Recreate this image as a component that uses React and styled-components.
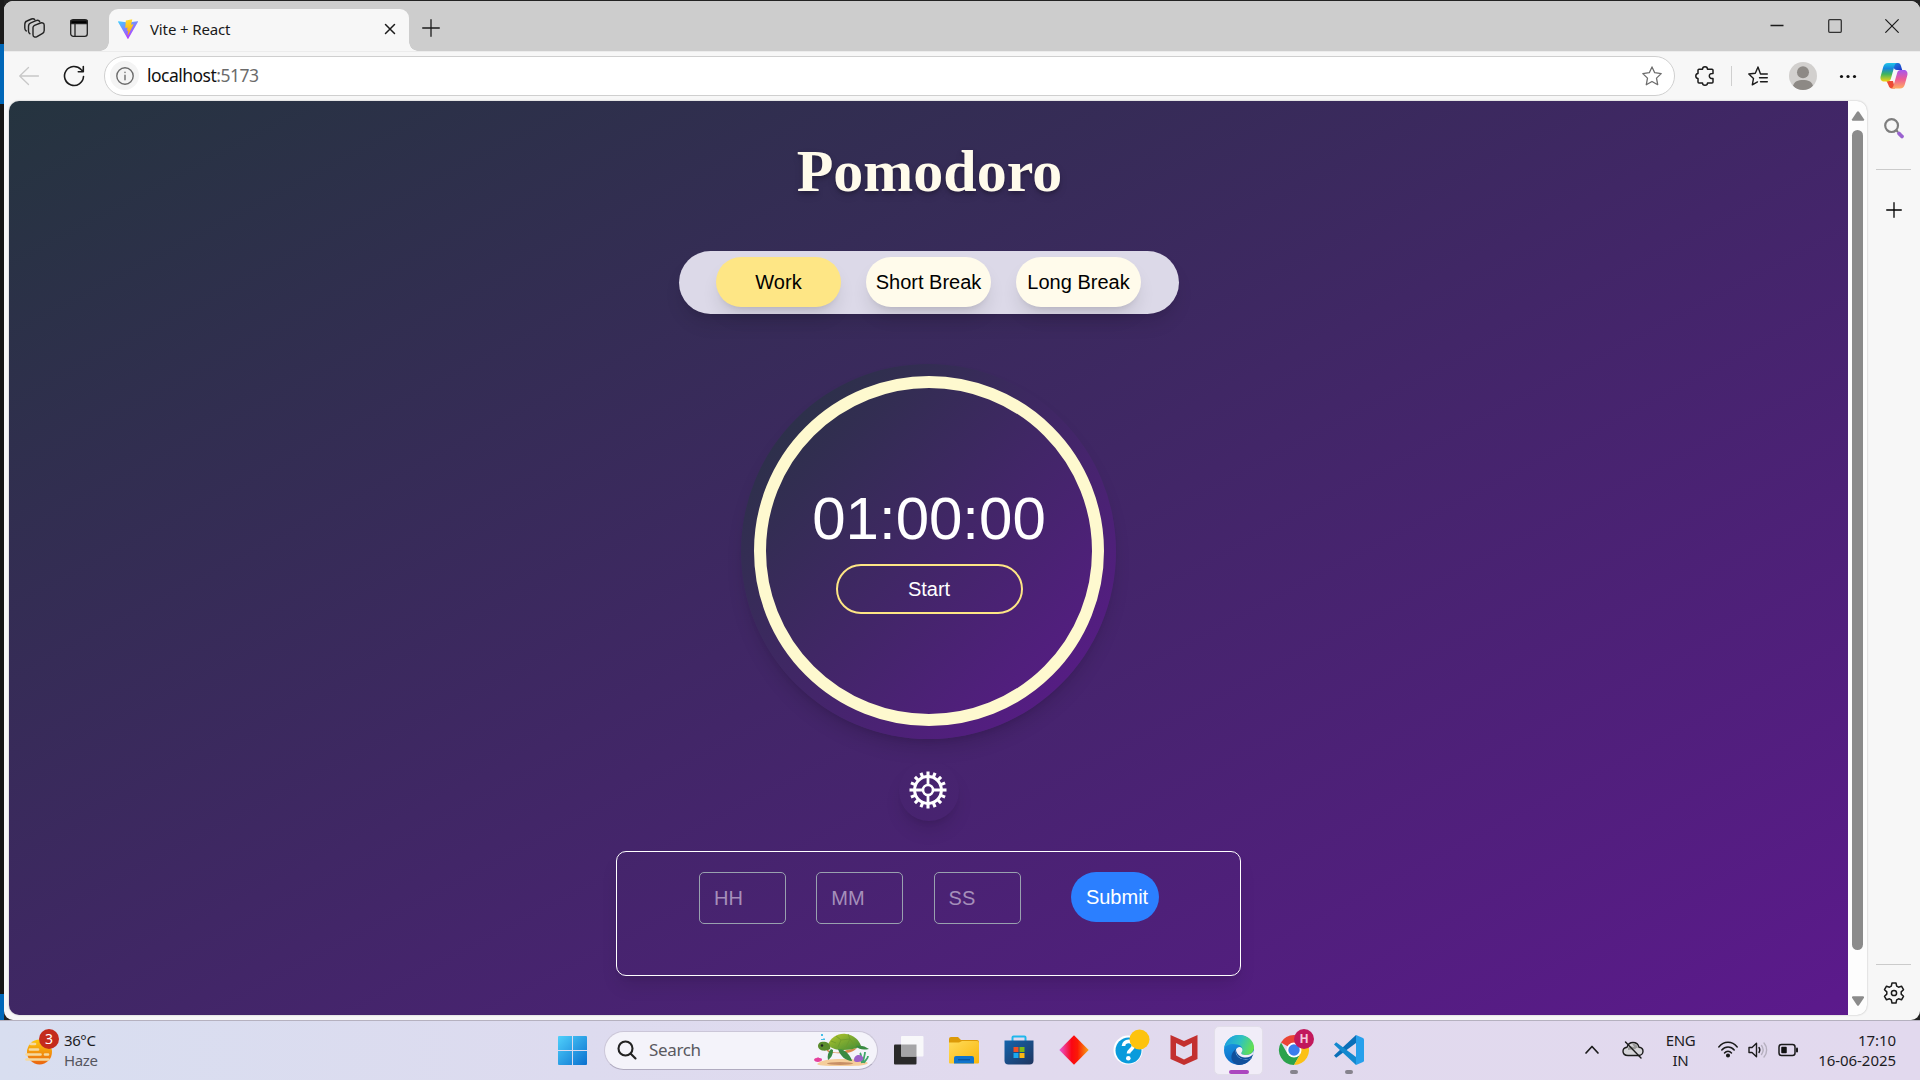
import React from "react";
import styled, { createGlobalStyle } from "styled-components";

const Global = createGlobalStyle`
  * { box-sizing: border-box; }
  html, body { margin: 0; padding: 0; overflow: hidden; }
  body { font-family: "Noto Sans", "Open Sans", sans-serif; background: #1b1b1b; }
  svg { display: block; flex: none; overflow: visible; }
  button, input { font: inherit; margin: 0; }
`;

const Desktop = styled.div`
  width: 1920px;
  height: 1080px;
  display: flex;
  flex-direction: column;
  overflow: hidden;
  background: linear-gradient(#1b1b1b 0 44px, #0067b8 44px 104px, #161616 104px 994px, #0067b8 994px 1019px) 0 0 / 4px 1020px no-repeat, #222;
`;

const Window = styled.div`
  width: 1916px;
  height: 1019px;
  margin: 1px 0 0 4px;
  border-radius: 9px;
  overflow: hidden;
  background: #f7f7f7;
  display: flex;
  flex-direction: column;
`;

const TitleBar = styled.div`
  height: 50px;
  flex: none;
  background: #cdcdcd;
  display: flex;
  align-items: flex-end;
`;

const TabTools = styled.div`
  width: 105px;
  height: 100%;
  padding: 4px 21px 0 20px;
  display: flex;
  align-items: center;
  justify-content: space-between;
`;

const Tab = styled.div`
  position: relative;
  width: 300px;
  height: 42px;
  padding: 0 13px 2px 9px;
  border-radius: 9px 9px 0 0;
  background: #f7f7f7;
  display: flex;
  align-items: center;
  &::before, &::after {
    content: "";
    position: absolute;
    bottom: 0;
    width: 9px;
    height: 9px;
  }
  &::before { left: -9px; background: radial-gradient(circle at 0 0, transparent 8.5px, #f7f7f7 9px); }
  &::after { right: -9px; background: radial-gradient(circle at 100% 0, transparent 8.5px, #f7f7f7 9px); }
`;

const TabTitle = styled.span`
  flex: 1;
  margin-left: 12px;
  font-size: 15px;
  letter-spacing: -0.13px;
  line-height: 20px;
  padding-bottom: 1px;
  color: #1a1a1a;
`;

const NewTab = styled.div`
  height: 100%;
  padding: 4px 0 0 13px;
  display: flex;
  align-items: center;
`;

const WindowButtons = styled.div`
  margin-left: auto;
  margin-right: -1px;
  height: 100%;
  display: grid;
  grid-template-columns: repeat(3, 57.5px);
  justify-items: center;
  align-items: center;
`;

const Toolbar = styled.div`
  height: 50px;
  flex: none;
  display: flex;
  align-items: center;
  padding-bottom: 2px;
  border-top: 1px solid #ececec;
`;

const NavButtons = styled.div`
  width: 100px;
  flex: none;
  padding-left: 15px;
  display: flex;
  align-items: center;
  gap: 24px;
`;

const AddressBar = styled.div`
  width: 1571px;
  flex: none;
  height: 40px;
  border: 1px solid #cfcfcf;
  border-radius: 20px;
  background: #fff;
  display: flex;
  align-items: center;
  padding: 0 12px 0 5px;
`;

const InfoBadge = styled.div`
  width: 29px;
  height: 29px;
  border-radius: 50%;
  background: #f4f4f4;
  display: grid;
  place-items: center;
`;

const Url = styled.span`
  flex: 1;
  margin-left: 8px;
  font-size: 17.5px;
  letter-spacing: -0.52px;
  line-height: 24px;
  padding-bottom: 1px;
  color: #111;
  span { color: #6b6b6b; }
`;

const ToolbarActions = styled.div`
  flex: none;
  display: grid;
  grid-template-columns: 60px 0 45px 45px 45px 48px;
  justify-items: center;
  align-items: center;
`;

const Divider = styled.div`
  width: 1px;
  height: 20px;
  margin-right: 8px;
  background: #cfcfcf;
`;

const Avatar = styled.div`
  width: 28px;
  height: 28px;
  border-radius: 50%;
  overflow: hidden;
  background: #d2d0ce;
`;

const Body = styled.div`
  flex: 1;
  display: flex;
  padding: 0 0 5px 5px;
`;

const Viewport = styled.div`
  width: 1858px;
  flex: none;
  height: 914px;
  display: flex;
  border-radius: 10px;
  overflow: hidden;
  background: #fdfdfd;
  box-shadow: 0 0 2px rgba(0, 0, 0, 0.28);
`;

const Page = styled.main`
  width: 1839px;
  flex: none;
  height: 914px;
  background: linear-gradient(to bottom right, #25343f, #5d198e) 0 0 / 100% 960px no-repeat;
  display: flex;
  flex-direction: column;
  align-items: center;
  font-family: "Liberation Sans", Arial, sans-serif;
  font-size: 20px;
`;

const Title = styled.h1`
  margin: 31px 0 0;
  padding-left: 2px;
  height: 75px;
  font-family: "Liberation Serif", "Times New Roman", serif;
  font-size: 60px;
  line-height: 78px;
  font-weight: 700;
  color: #fffbeb;
  text-shadow: 0 3px 3px rgba(0, 0, 0, 0.18), 0 4px 8px rgba(0, 0, 0, 0.12);
`;

const softShadow = "0 12px 19px -4px rgba(0,0,0,.12), 0 5px 7px -5px rgba(0,0,0,.12)";

const Modes = styled.div`
  margin-top: 44px;
  width: 500px;
  height: 63px;
  border-radius: 32px;
  background: #dcd9e8;
  box-shadow: ${softShadow};
  display: flex;
  justify-content: center;
  gap: 25px;
  padding: 6px 0;
`;

const ModeButton = styled.button`
  width: 125px;
  height: 50px;
  padding: 0;
  border: 0;
  border-radius: 25px;
  color: #000;
  white-space: nowrap;
  background: ${(p) => (p.$active ? "#fee685" : "#fffbeb")};
  box-shadow: ${softShadow};
`;

const Dial = styled.div`
  margin-top: 50px;
  width: 375px;
  height: 375px;
  padding: 12px 12px 13px 13px;
  border-radius: 50%;
  background: linear-gradient(to bottom right, #25343f, #5d198e);
  box-shadow: 0 12px 19px -4px rgba(0,0,0,.14), 0 5px 7px -5px rgba(0,0,0,.14);
`;

const Ring = styled.div`
  width: 350px;
  height: 350px;
  border: 12.5px solid #fef9cf;
  border-radius: 50%;
  display: flex;
  flex-direction: column;
  align-items: center;
  padding-top: 101px;
`;

const Time = styled.div`
  height: 60px;
  font-size: 60px;
  line-height: 60px;
  color: #fff;
`;

const StartButton = styled.button`
  margin-top: 15px;
  width: 187px;
  height: 50px;
  border: 2px solid #fee685;
  border-radius: 25px;
  background: transparent;
  color: #fff;
`;

const GearButton = styled.div`
  margin-top: 22px;
  width: 60px;
  height: 60px;
  border-radius: 50%;
  display: flex;
  justify-content: center;
  padding: 10px 1px 0 0;
  box-shadow: ${softShadow};
`;

const Form = styled.form`
  margin-top: 30px;
  width: 625px;
  height: 125px;
  border: 1px solid #fff;
  border-radius: 10px;
  box-shadow: ${softShadow};
  padding: 20px 0 0 82px;
  display: flex;
  align-items: flex-start;
  gap: 30.3px;
`;

const Field = styled.input`
  width: 87px;
  height: 52px;
  padding: 0 14px;
  border: 1px solid #99a1af;
  border-radius: 5px;
  background: transparent;
  color: #fff;
  &::placeholder { color: #a58fba; opacity: 1; }
`;

const Submit = styled.button`
  width: 88px;
  height: 50px;
  margin-left: 20px;
  padding: 0 0 0 15px;
  text-align: left;
  border: 0;
  border-radius: 25px;
  background: #2b7fff;
  color: #fff;
`;

const Scrollbar = styled.div`
  width: 19px;
  display: flex;
  flex-direction: column;
  align-items: center;
  padding: 10px 0 9px 0;
`;

const Thumb = styled.div`
  width: 11px;
  height: 820px;
  margin: 9px 0 auto;
  border-radius: 6px;
  background: #8b8b8b;
`;

const Sidebar = styled.aside`
  flex: 1;
  display: flex;
  flex-direction: column;
  align-items: center;
  padding-top: 17px;
  padding-bottom: 11px;
`;

const Rule = styled.div`
  width: 35px;
  height: 1px;
  background: #cbcbcb;
  margin: ${(p) => p.$m};
`;

const Taskbar = styled.footer`
  height: 60px;
  flex: none;
  border-top: 1px solid #b5b1bf;
  background: linear-gradient(90deg, #d8def0 0, #dddbef 30%, #e1daee 52%, #e2d9ee 100%);
  display: grid;
  grid-template-columns: 545px 832px 1fr;
`;

const Weather = styled.div`
  display: flex;
  align-items: center;
  padding: 0 0 2px 24px;
`;

const WeatherIcon = styled.div`
  position: relative;
  width: 30px;
  height: 36px;
  padding-top: 7px;
`;

const Badge = styled.span`
  position: absolute;
  left: 15px;
  top: -3px;
  width: 20px;
  height: 20px;
  border-radius: 50%;
  background: #c42b1c;
  color: #fff;
  font-size: 14px;
  line-height: 20px;
  text-align: center;
`;

const Lines = styled.div`
  margin-left: ${(p) => p.$ml || 0};
  text-align: ${(p) => p.$align || "left"};
  font-size: 15px;
  line-height: 20px;
  letter-spacing: ${(p) => p.$ls || "-0.4px"};
  color: #1c1c1f;
  white-space: nowrap;
`;

const Muted = styled.div`
  color: #55565f;
`;

const Apps = styled.div`
  display: flex;
  align-items: center;
  padding-bottom: 1px;
`;

const Slot = styled.div`
  position: relative;
  width: 55px;
  height: 58px;
  flex: none;
  display: grid;
  place-items: center;
`;

const ActiveTile = styled.div`
  width: 49px;
  height: 49px;
  border-radius: 5px;
  background: #f1edf8;
  border: 1px solid #e2deea;
  display: grid;
  place-items: center;
`;

const Indicator = styled.span`
  position: absolute;
  bottom: 5px;
  left: calc(50% - ${(p) => p.$w / 2}px);
  width: ${(p) => p.$w}px;
  height: 4px;
  border-radius: 2px;
  background: ${(p) => p.$c};
`;

const SearchBox = styled.div`
  width: 274px;
  height: 39px;
  margin: 0 3px 0 4px;
  flex: none;
  border: 1px solid #cbc6d8;
  border-bottom-color: #b0abc0;
  border-radius: 20px;
  background: #f4f3fa;
  display: flex;
  align-items: center;
  padding: 0 7px 0 12px;
`;

const SearchText = styled.span`
  flex: 1;
  margin-left: 12px;
  font-size: 17px;
  letter-spacing: -0.35px;
  line-height: 24px;
  padding-bottom: 1px;
  color: #5a5960;
`;

const Tray = styled.div`
  display: flex;
  align-items: center;
  justify-content: flex-end;
  padding: 0 24px 2px 0;
`;

const TrayIcons = styled.div`
  display: flex;
  align-items: center;
  gap: ${(p) => p.$gap};
  margin: ${(p) => p.$m};
`;

const Ico = ({ w = 20, h, vb, sw = 1.3, c = "#1b1b1b", children }) => (
  <svg width={w} height={h || w} viewBox={vb || `0 0 ${w} ${h || w}`} fill="none" stroke={c} strokeWidth={sw} strokeLinecap="round" strokeLinejoin="round">
    {children}
  </svg>
);

const ViteLogo = () => (
  <svg width="20" height="20" viewBox="0 0 20 20">
    <defs>
      <linearGradient id="va" x1="0" y1="0" x2=".6" y2="1"><stop stopColor="#41d1ff" /><stop offset="1" stopColor="#bd34fe" /></linearGradient>
      <linearGradient id="vb" x1=".5" y1="0" x2=".6" y2="1"><stop stopColor="#ffdd35" /><stop offset="1" stopColor="#ffa800" /></linearGradient>
    </defs>
    <path d="M.5 2.2 10 3.6l9.5-1.4c.5 0 .7.3.4.7l-9.6 16.8c-.2.3-.5.3-.7 0L.1 2.9c-.2-.4 0-.7.4-.7z" fill="url(#va)" />
    <path d="M14.4.2 8 1.4c-.2 0-.2.2-.2.3l-.5 7c0 .2.2.3.3.3l2-.5-.6 3c0 .2.1.3.3.3l1.2-.3-.9 4.2c0 .4.3.4.5.2l5.3-10.2c.1-.2-.1-.4-.3-.4l-2 .4 1.2-5.1c.1-.3 0-.4-.2-.4z" fill="url(#vb)" />
  </svg>
);

const Copilot = () => (
  <svg width="28" height="28" viewBox="0 0 28 28">
    <defs>
      <linearGradient id="c1" x1="0" y1="0" x2="0" y2="1"><stop stopColor="#20c5e8" /><stop offset=".3" stopColor="#1687dc" /><stop offset=".6" stopColor="#3fb45e" /><stop offset="1" stopColor="#f5d414" /></linearGradient>
      <linearGradient id="c2" x1="0" y1="0" x2="0" y2="1"><stop stopColor="#a557f0" /><stop offset=".5" stopColor="#ee5c94" /><stop offset="1" stopColor="#ffae62" /></linearGradient>
      <linearGradient id="c3" x1="0" y1="0" x2="1" y2="1"><stop stopColor="#1a8be0" /><stop offset="1" stopColor="#1e35c8" /></linearGradient>
    </defs>
    <path d="M11 1h7c1.600 0 2.500 1.300 3 3l1.200 4H17c-2 0-3-1-3.500-3z" fill="url(#c3)" />
    <path d="M6.500 19H13l2 7.500h-3c-2 0-3-1.500-3.600-3.500z" fill="#ec4b35" />
    <path d="M8 1h9.500c-2 0-2.600 1.500-3.200 3.500L10.800 17c-.6 1.600-1.500 2.500-3.300 2.500H4.300C1.500 19.500 0 17.500.6 14.500L3.200 5C4 2.300 5.300 1 8 1z" fill="url(#c1)" />
    <path d="M20 26.500h-9.500c2 0 2.600-1.500 3.200-3.500L17.200 10.800c.6-1.800 1.500-2.800 3.300-2.800h3.200c2.800 0 4.300 2 3.700 5l-2.600 9.500c-.8 2.700-2.100 4-4.800 4z" fill="url(#c2)" />
  </svg>
);

const PageGear = () => (
  <svg width="38" height="38" viewBox="0 0 38 38" fill="none" stroke="#fff">
    {Array.from({ length: 16 }, (_, i) => (
      <path key={i} d="M19 .5V5" strokeWidth="3.100" transform={`rotate(${i * 22.5} 19 19)`} />
    ))}
    <circle cx="19" cy="19" r="13.400" strokeWidth="3" />
    <circle cx="19" cy="19" r="5" strokeWidth="2.600" />
    <path d="M19 5v9.500M19 23.500V33M5 19h9.500M23.500 19H33" strokeWidth="2.800" />
  </svg>
);

const Turtle = () => (
  <svg width="56" height="34" viewBox="0 0 56 34">
    <defs><linearGradient id="t1" x1="0" y1="0" x2="1" y2="1"><stop stopColor="#b6c62c" /><stop offset="1" stopColor="#3f8c35" /></linearGradient></defs>
    <path d="M3 31c4-4 12-5 25-5s22 1 26 4c-2 3-14 3-26 3S5 33 3 31z" fill="#f5cd9a" />
    <ellipse cx="26" cy="30.500" rx="13" ry="1.500" fill="#c78f66" />
    <path d="M0 27c1-3 3-1 4-3 1 2 4 0 4 3 0 2-7 3-8 0z" fill="#e5409c" />
    <path d="M48 30c-1-4 0-8-2-10M49 30c0-4 2-7 2-11M50 30c1-3 4-4 4-7" stroke="#3fa66a" strokeWidth="1.800" fill="none" />
    <path d="M40 27c0-5 5-6 8-4 3 3 0 6-4 6-2 0-4 0-4-2z" fill="#9c60c8" />
    <path d="M13 16c4 4 10 5 20 1l10-2c-4 5-14 6-22 5-5 0-9-1-8-4z" fill="#d98a4a" />
    <path d="M14 12C17 4 24 0 32 1c8 1 13 6 15 12-6 3-12 4-18 4-6 0-11-1-15-5z" fill="url(#t1)" />
    <path d="M22 3l5 4-3 7M27 7l9-1 5 7M36 6l-2-5M31 16l5-10M17 8l5 2" stroke="#6f992c" strokeWidth=".8" fill="none" />
    <path d="M4 13c0-4 4-5 8-4 3 1 5 4 4 7-4 3-12 2-12-3z" fill="#5b8c2c" />
    <circle cx="8" cy="12.500" r="1.200" fill="#222" />
    <path d="M24 16c5 0 9 3 11 6s3 5 3 6c-6 0-12-5-14-12zM19 17c0 5-2 8-5 10-1-4 0-8 3-11zM42 13c5-1 9 0 13 3-5 1-10 1-13-3z" fill="#398a42" />
    <path d="M8 1v2M10 5.500v1.500M8 6v1" stroke="#45bee8" strokeWidth="2" />
  </svg>
);

const Edge = () => (
  <svg width="30" height="30" viewBox="0 0 30 30">
    <defs>
      <linearGradient id="e1" x1="0" y1=".3" x2="1" y2=".6"><stop stopColor="#1b9de2" /><stop offset=".5" stopColor="#2fc2c0" /><stop offset="1" stopColor="#68e24a" /></linearGradient>
      <linearGradient id="e2" x1=".2" y1="0" x2=".5" y2="1"><stop stopColor="#1ba2e6" /><stop offset="1" stopColor="#0b62c4" /></linearGradient>
    </defs>
    <circle cx="15" cy="15" r="15" fill="url(#e2)" />
    <path d="M.1 13.500C1 6 7 0 15 0c9 0 15 6 15 12.500 0 4.500-3.500 7.500-8 7.500-4 0-5.500-1.500-4.500-3 2-3 .5-6.500-4-7.500C8 8 2 9.500.1 13.500z" fill="url(#e1)" />
    <path d="M12 14c-2 5 2 10 8 10.500 3 .2 5.500-.5 8-2C25 27 20 30 15 30 9 29 6 24 8 19c.8-2 2.200-4 4-5z" fill="#104f9b" />
    <path d="M12 14.500c1-2.500 4-3.500 5.800-1.500 1.200 1.500.5 3.500-.3 4.500-.8 1.200.5 2.500 4.500 2.500 3.500 0 6-1.500 7.500-4 .5 3 .2 5-1.500 6.500-2.500 2-6 2.500-9.500 1.500-4.500-1-7.500-5-6.500-9.500z" fill="#f1edf8" />
    <path d="M12 15c-.8 5 3.500 9 8.500 9.300 3 .1 5.500-.6 7-1.300l2-4c-2 2-5 4-9 3.500-4.500-.5-8-3.500-8.500-7.500z" fill="#104f9b" />
    <path d="M29.700 15.500l-.2 4-1.500 3.500 3 0v-8z" fill="#f1edf8" />
  </svg>
);

const Chrome = () => (
  <svg width="36" height="36" viewBox="0 0 36 36">
    <path d="M18 18 5 10.500A15 15 0 0 1 31 10.500z" fill="#ea4335" />
    <path d="M18 18l6.500 3.700L18 33A15 15 0 0 1 5 10.500l6.500 11.200z" fill="#2ba24c" />
    <path d="M18 11h13.300A15 15 0 0 1 18 33l6.300-11z" fill="#fbc116" />
    <circle cx="18" cy="18" r="7.500" fill="#fff" /><circle cx="18" cy="18" r="5.700" fill="#3b7ded" />
  </svg>
);

const ProfileBadge = styled.span`
  position: absolute;
  left: 28px;
  top: 8px;
  width: 20px;
  height: 20px;
  border-radius: 50%;
  background: #c2185b;
  color: #f4c8da;
  font: 700 12px/20px "Open Sans", sans-serif;
  text-align: center;
`;

export default function App() {
  return (
    <Desktop>
      <Global />
      <Window>
        <TitleBar>
          <TabTools>
            <Ico w={21} sw={1.400} c="#222">
              <path d="M9 9.500c0-1 .5-1.700 1.500-2.200l6-2.300c2-.8 3.700.2 3.700 2.200v5.300c0 1.500-.6 2.500-2 3.200l-5.200 3c-2 1-4 .3-4-1.900zM6 15.800c-1-.5-1.500-1.300-1.500-2.800V8.500c0-1.700.8-3 2.300-3.600L12 2.700c1.500-.6 3-.3 3.700.8M2.300 13C1.200 12.500.8 11.500.8 10V6.500C.8 4.800 1.500 3.500 3 3L7.500 1c1.300-.5 2.500-.3 3.200.5" />
            </Ico>
            <Ico w={18} c="#222" sw={1.300}>
              <rect x=".7" y=".7" width="16.600" height="16.600" rx="2.600" /><path d="M.9 1.500h16.200v3.200H.9z" fill="#000" /><path d="M5 5v12" />
            </Ico>
          </TabTools>
          <Tab>
            <ViteLogo />
            <TabTitle>Vite + React</TabTitle>
            <Ico w={12} sw={1.500}><path d="M1.500 1.500l9 9M10.500 1.500l-9 9" /></Ico>
          </Tab>
          <NewTab><Ico w={18} sw={1.300}><path d="M9 .7v16.600M.7 9h16.600" /></Ico></NewTab>
          <WindowButtons>
            <Ico w={14}><path d="M.5 6.500h13" strokeLinecap="butt" /></Ico>
            <Ico w={14} c="#333"><rect x=".7" y=".7" width="12.600" height="12.600" rx="1" /></Ico>
            <Ico w={14} sw={1.200}><path d="M.7.700l12.600 12.600M13.300.7L.7 13.300" /></Ico>
          </WindowButtons>
        </TitleBar>

        <Toolbar>
          <NavButtons>
            <Ico w={20} c="#c8c8c8"><path d="M19.500 10H.7M9.500 1.500L.7 10l8.800 8.500" /></Ico>
            <Ico w={22} sw={1.600}><path d="M20.500 11.500A9.500 9.500 0 1 1 18 4.500l2 2M20.300 1.500v5.200h-5" /></Ico>
          </NavButtons>
          <AddressBar>
            <InfoBadge>
              <Ico w={18} c="#6d6d6d" sw={1.400}><circle cx="9" cy="9" r="8.200" /><path d="M9 8.300v4.400M9 5.300v.2" /></Ico>
            </InfoBadge>
            <Url>localhost<span>:5173</span></Url>
            <Ico w={20} c="#6d6d6d"><path d="M10 .9l2.700 5.800 6.500.9-4.700 4.500 1.200 6.600L10 15.500l-5.700 3.200 1.200-6.600L.8 7.600l6.500-.9z" /></Ico>
          </AddressBar>
          <ToolbarActions>
            <Ico w={20} sw={1.500}><path d="M4 3.300h3.500C7.500 1.700 8.500.7 10 .7s2.500 1 2.500 2.600H17c.7 0 1 .3 1 1V7.500c-2-.3-3.700.7-3.700 2.500s1.700 2.800 3.700 2.500V16c0 .7-.3 1-1 1h-4.500c0 1.500-1 2.300-2.500 2.300S7.500 18.500 7.500 17H4c-.7 0-1-.3-1-1v-3.500C1.500 12.300.8 11.300.8 10S1.500 7.700 3 7.500V4.300c0-.7.300-1 1-1z" /></Ico>
            <Divider />
            <Ico w={20} sw={1.400}><path d="M19.300 8H12.500L10 1 7.300 7.300.8 8l4.700 4.400-1.200 6.500 5.200-3M11.500 11.800h7.800M12.500 15.800h6.800" /></Ico>
            <Avatar>
              <svg width="28" height="28" viewBox="0 0 28 28" fill="#8d8985"><circle cx="14" cy="10.300" r="6" /><path d="M4 24c1-4.500 5-6 10-6s9 1.500 10 6l-4 4H8z" /></svg>
            </Avatar>
            <svg width="18" height="6" viewBox="0 0 18 6" fill="#111"><circle cx="2.500" cy="3.500" r="1.600" /><circle cx="9" cy="3.500" r="1.600" /><circle cx="15.500" cy="3.500" r="1.600" /></svg>
            <Copilot />
          </ToolbarActions>
        </Toolbar>

        <Body>
          <Viewport>
            <Page>
              <Title>Pomodoro</Title>
              <Modes>
                <ModeButton $active>Work</ModeButton>
                <ModeButton>Short Break</ModeButton>
                <ModeButton>Long Break</ModeButton>
              </Modes>
              <Dial>
                <Ring>
                  <Time>01:00:00</Time>
                  <StartButton>Start</StartButton>
                </Ring>
              </Dial>
              <GearButton><PageGear /></GearButton>
              <Form>
                <Field placeholder="HH" />
                <Field placeholder="MM" />
                <Field placeholder="SS" />
                <Submit type="button">Submit</Submit>
              </Form>
            </Page>
            <Scrollbar>
              <svg width="12" height="10" viewBox="0 0 12 10" fill="#8b8b8b"><path d="M5 .8q1-1.200 2 0l5 7.400q.5 1.500-1 1.500H1q-1.500 0-1-1.500z" /></svg>
              <Thumb />
              <svg width="12" height="10" viewBox="0 0 12 10" fill="#8b8b8b"><path d="M5 9.200q1 1.200 2 0l5-7.400q.5-1.500-1-1.500H1q-1.500 0-1 1.500z" /></svg>
            </Scrollbar>
          </Viewport>
          <Sidebar>
            <svg width="20" height="20" viewBox="0 0 20 20" fill="none">
              <path d="M15 15.500l3 3" stroke="#9a62d0" strokeWidth="3.800" strokeLinecap="round" /><path d="M12 12l2 2" stroke="#777" strokeWidth="2" /><circle cx="7.600" cy="7.600" r="6.400" stroke="#7e7e7e" strokeWidth="2.200" />
            </svg>
            <Rule $m="31px 0 32px" />
            <Ico w={16} sw={1.300} c="#000"><path d="M8 .7v14.600M.7 8h14.600" /></Ico>
            <Rule $m="auto 0 17px" />
            <Ico w={22} sw={1.500}>
              <path d="M9 1h4l.7 3.200 1.800 1 3-1 2 3.500-2.300 2.200v2.200l2.300 2.200-2 3.500-3-1-1.800 1L13 21H9l-.7-3.200-1.800-1-3 1-2-3.500 2.300-2.200V9.900L1.500 7.700l2-3.500 3 1 1.800-1z" /><circle cx="11" cy="11" r="2.600" />
            </Ico>
          </Sidebar>
        </Body>
      </Window>

      <Taskbar>
        <Weather>
          <WeatherIcon>
            <svg width="30" height="28" viewBox="0 0 30 28">
              <defs><linearGradient id="s1" x1="0" y1="0" x2="0" y2="1"><stop stopColor="#fcc80c" /><stop offset="1" stopColor="#ea6410" /></linearGradient></defs>
              <circle cx="15.500" cy="13" r="12.500" fill="url(#s1)" />
              <path d="M7 5h4M6 10.500h8M2.500 15.500h14M21 15.500h3M2.500 20.500h22" stroke="#f4d9a0" strokeWidth="2.700" strokeLinecap="round" />
            </svg>
            <Badge>3</Badge>
          </WeatherIcon>
          <Lines $ml="10px">36°C<Muted>Haze</Muted></Lines>
        </Weather>

        <Apps>
          <Slot>
            <svg width="29" height="29" viewBox="0 0 29 29">
              <defs><linearGradient id="w1" x1="0" y1="0" x2="1" y2="1" gradientUnits="objectBoundingBox"><stop stopColor="#4fd0fb" /><stop offset="1" stopColor="#0a70cf" /></linearGradient></defs>
              <path d="M1 0h13v14H0V1q0-1 1-1zM15 0h13q1 0 1 1v13H15zM0 15h14v14H1q-1 0-1-1zM15 15h14v13q0 1-1 1H15z" fill="url(#w1)" />
            </svg>
          </Slot>
          <SearchBox>
            <Ico w={20} sw={2.100} c="#222"><circle cx="8.500" cy="8.500" r="7" /><path d="M13.500 13.500l5 5" /></Ico>
            <SearchText>Search</SearchText>
            <Turtle />
          </SearchBox>
          <Slot>
            <svg width="31" height="29" viewBox="0 0 31 29"><rect x="1" y="8.500" width="22.500" height="20" rx="1" fill="#2a2a2a" /><rect x="8" y="0" width="22.500" height="20.500" rx="1" fill="#f8f8fa" /><path d="M8 8.500h15.500v12H8z" fill="#a5a5a7" /></svg>
          </Slot>
          <Slot>
            <svg width="30" height="27" viewBox="0 0 30 27">
              <defs><linearGradient id="f1" x1="0" y1="0" x2="1" y2="1"><stop stopColor="#ffdb5a" /><stop offset="1" stopColor="#f9b70b" /></linearGradient></defs>
              <path d="M0 2q0-2 2-2h7l3 3h16q2 0 2 2v6H0z" fill="#dc9a08" /><path d="M0 5.500h10L13 4h15q2 0 2 2v19.500q0 1-1 1H1q-1 0-1-1z" fill="url(#f1)" />
              <path d="M5 26.500V21q0-2 2-2h16q2 0 2 2v5.500z" fill="#0f74cc" /><path d="M9 22.800h12" stroke="#084a8d" />
            </svg>
          </Slot>
          <Slot>
            <svg width="30" height="30" viewBox="0 0 30 30">
              <defs><linearGradient id="m1" x1="0" y1="0" x2="1" y2="1"><stop stopColor="#1464ac" /><stop offset="1" stopColor="#20355f" /></linearGradient></defs>
              <path d="M8.500 6V2.500q0-1 1-1h11q1 0 1 1V6" fill="none" stroke="#20b7ec" strokeWidth="2" /><path d="M.5 5.500h29v20q0 4-4 4h-21q-4 0-4-4z" fill="url(#m1)" />
              <path d="M9.500 12h5v5h-5z" fill="#f15123" /><path d="M15.500 12h5v5h-5z" fill="#7fba14" /><path d="M9.500 18h5v5h-5z" fill="#1ba9ee" /><path d="M15.500 18h5v5h-5z" fill="#fdb813" />
            </svg>
          </Slot>
          <Slot>
            <svg width="30" height="30" viewBox="0 0 30 30">
              <defs><linearGradient id="d1" x1="0" y1="0" x2="1" y2="0"><stop stopColor="#e858d8" /><stop offset=".42" stopColor="#fb0614" /><stop offset=".62" stopColor="#fb1a05" /><stop offset="1" stopColor="#f7a716" /></linearGradient></defs>
              <path d="M15 .3L29.700 15 15 29.700.3 15z" fill="url(#d1)" />
            </svg>
          </Slot>
          <Slot>
            <svg width="36" height="36" viewBox="0 0 36 36">
              <circle cx="17" cy="18" r="14.500" fill="#fff" /><circle cx="17.500" cy="18.500" r="13" fill="#0a9bdc" />
              <path d="M12.500 14c0-6 10-6 10-.5 0 4-5 4.200-5 8" fill="none" stroke="#fff" strokeWidth="3.700" /><circle cx="17.300" cy="26.300" r="2.300" fill="#fff" /><circle cx="28.500" cy="7.500" r="10" fill="#fdc30e" />
            </svg>
          </Slot>
          <Slot>
            <svg width="28" height="30" viewBox="0 0 28 30"><path fillRule="evenodd" d="M.5 0L14 6 27.500 0v24L14 30 .5 24zM6 8v12.500l8 4 8-4V8l-8 4z" fill="#c3302f" /></svg>
          </Slot>
          <Slot><ActiveTile><Edge /></ActiveTile><Indicator $w={20} $c="#ab47bf" /></Slot>
          <Slot><Chrome /><ProfileBadge>H</ProfileBadge><Indicator $w={8} $c="#86838d" /></Slot>
          <Slot>
            <svg width="30" height="30" viewBox="0 0 30 30">
              <path d="M22 0L0 20.500l2.200 2.200L22 8z" fill="#0a6fb8" /><path d="M22 30L0 9.500l2.200-2.200L22 22z" fill="#1389cf" /><path d="M22 0l7 3q1 .5 1 1.500v21q0 1-1 1.500l-7 3z" fill="#27a0ec" />
            </svg>
            <Indicator $w={8} $c="#86838d" />
          </Slot>
        </Apps>

        <Tray>
          <TrayIcons $gap="23px" $m="0 22px 0 0">
            <Ico w={14} h={10} sw={1.700}><path d="M1 8l6-6.500L13 8" /></Ico>
            <Ico w={22} h={18} sw={1.400}>
              <path d="M6 14.500c-3 0-5-1.800-5-4.300 0-2.200 1.800-3.700 4-4C6 3 8.200 1.500 11 1.500c3.200 0 5.300 2 6 4.700 2.300.2 4 1.600 4 4 0 2.500-2 4.300-4.500 4.300z" fill="#d5d4d8" />
              <path d="M6 7c2-2 6-2 8 1l-8 1zM10 2.500c3 0 5 1.500 6 4l-3 1z" fill="#999" stroke="none" /><path d="M3.500 1l15.500 16" />
            </Ico>
          </TrayIcons>
          <Lines $align="center">ENG<div>IN</div></Lines>
          <TrayIcons $gap="10px" $m="0 19px 0 23px">
            <Ico w={20} h={17} sw={1.500}><path d="M.8 6C6-.2 14-.2 19.200 6M3.800 9c3.500-4 9-4 12.400 0M6.500 12c2-2.400 5-2.400 7 0" /><circle cx="10" cy="14.500" r="1.300" fill="#111" /></Ico>
            <Ico w={20} h={16} sw={1.400}><path d="M1 5.500h3L8.500 1.200v13.600L4 10.500H1zM11 5.500c1 1.500 1 3.500 0 5" /><path d="M13.500 3.500c2 2.700 2 6.300 0 9M16 1c3.500 4 3.500 10 0 14" stroke="#b5afbe" /></Ico>
            <Ico w={21} h={14} sw={1.500}><rect x="1" y="1.500" width="16" height="11" rx="2.500" /><path d="M4 4.500h4v5H4z" fill="#111" stroke="#111" /><path d="M19 5.500v3" strokeWidth="2" /></Ico>
          </TrayIcons>
          <Lines $align="right" $ls="-0.05px">17:10<div>16-06-2025</div></Lines>
        </Tray>
      </Taskbar>
    </Desktop>
  );
}
